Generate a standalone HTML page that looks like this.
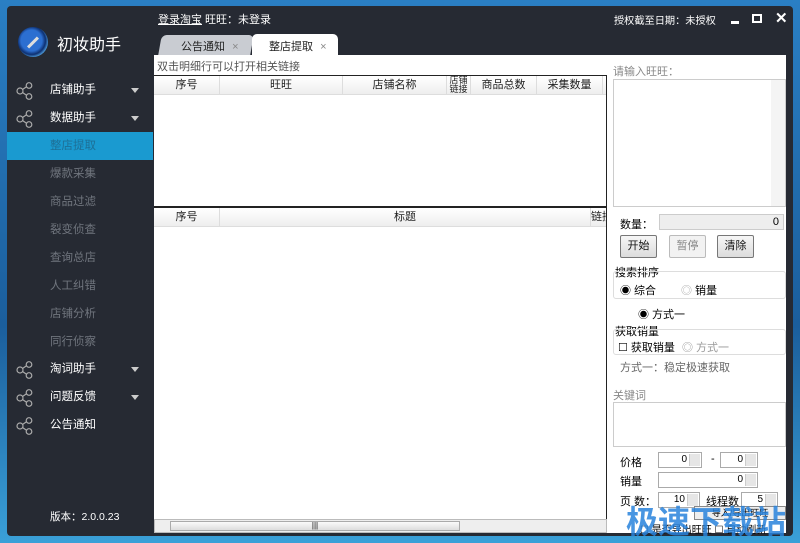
<!DOCTYPE html>
<html><head><meta charset="utf-8"><style>
*{margin:0;padding:0;box-sizing:border-box}
body{width:800px;height:543px;overflow:hidden;background:linear-gradient(180deg,#2a7fc4,#1b5e9c 60%,#3aa0d8);font-family:"Liberation Sans","Noto Sans CJK SC",sans-serif;font-size:11px;position:relative}
.win{position:absolute;left:7px;top:6px;width:786px;height:530px;background:#262a33;border-radius:4px}
.a{position:absolute;white-space:nowrap}
.side .it{position:absolute;left:0;width:146px;height:28px;line-height:28px;color:#fff;font-size:11.5px}
.side .sub{color:#70757e;padding-left:43px}
.ic{position:absolute;left:9px;top:6px}
.arr{position:absolute;right:14px;top:12px;border-left:4px solid transparent;border-right:4px solid transparent;border-top:5px solid #ccc}
.th{position:absolute;top:0;height:19px;line-height:19px;text-align:center;border-right:1px solid #ddd;color:#222;overflow:hidden;white-space:nowrap}
.btn{position:absolute;height:23px;width:37px;border:1px solid #777;border-radius:2px;background:linear-gradient(#f6f6f6,#dcdcdc);text-align:center;line-height:21px;color:#111}
.sp{position:absolute;height:16px;border:1px solid #aaa;background:#fff;text-align:right;padding-right:14px;line-height:14px;font-size:10px}
.sp:after{content:"";position:absolute;right:1px;top:1px;width:10px;height:12px;background:#e6e6e6;border-left:1px solid #ccc}
</style></head><body>
<div class="win">
 <div class="a" style="left:11px;top:21px;width:30px;height:30px;border-radius:50%;background:radial-gradient(circle at 45% 45%,#2c6fd1 0 45%,#0d2f70 60%,#5ab0f0 75%,#1f4f9c 100%)"></div>
 <div class="a" style="left:19px;top:35px;width:14px;height:3px;background:#ddd;transform:rotate(-45deg)"></div>
 <div class="a" style="left:50px;top:25px;color:#fff;font-size:16px">初妆助手</div>
 <div class="a" style="left:151px;top:5px;color:#fff;font-size:11px"><u>登录淘宝</u> 旺旺：未登录</div>
 <div class="a" style="left:607px;top:6px;color:#fff;font-size:10.2px">授权截至日期：未授权</div>
 <div class="a" style="left:724px;top:15px;width:8px;height:3px;background:#fff"></div>
 <div class="a" style="left:745px;top:8px;width:10px;height:9px;border:2px solid #fff"></div>
 <div class="a" style="left:768px;top:3px;color:#fff;font-size:15px;font-weight:bold">✕</div>
 <div class="a" style="left:153px;top:29px;width:92px;height:20px;background:#c9ccd2;border-radius:5px 5px 0 0;transform:skewX(-10deg);"></div>
 <div class="a" style="left:174px;top:32px;font-size:11px;color:#222">公告通知 <span style="color:#888;margin-left:4px">×</span></div>
 <div class="a" style="left:245px;top:28px;width:86px;height:22px;background:#fff;border-radius:5px 5px 0 0"></div>
 <div class="a" style="left:262px;top:32px;font-size:11px;color:#222">整店提取 <span style="color:#888;margin-left:4px">×</span></div>
 <div class="side">
  <div class="it" style="top:70px"><svg class="ic" width="18" height="18" viewBox="0 0 18 18" fill="none" stroke="#aaa" stroke-width="1.2"><circle cx="4" cy="9" r="3"/><circle cx="13" cy="3.5" r="2.8"/><circle cx="13" cy="14.5" r="2.8"/><path d="M6.5 7.5L10.5 4.8M6.5 10.5L10.5 13.2"/></svg><span style="margin-left:43px">店铺助手</span><i class="arr"></i></div>
  <div class="it" style="top:98px"><svg class="ic" width="18" height="18" viewBox="0 0 18 18" fill="none" stroke="#aaa" stroke-width="1.2"><circle cx="4" cy="9" r="3"/><circle cx="13" cy="3.5" r="2.8"/><circle cx="13" cy="14.5" r="2.8"/><path d="M6.5 7.5L10.5 4.8M6.5 10.5L10.5 13.2"/></svg><span style="margin-left:43px">数据助手</span><i class="arr"></i></div>
  <div class="it sub" style="top:126px;background:#1a9ad0;color:#1d6f96;height:28px">整店提取</div>
  <div class="it sub" style="top:154px">爆款采集</div>
  <div class="it sub" style="top:182px">商品过滤</div>
  <div class="it sub" style="top:210px">裂变侦查</div>
  <div class="it sub" style="top:238px">查询总店</div>
  <div class="it sub" style="top:266px">人工纠错</div>
  <div class="it sub" style="top:294px">店铺分析</div>
  <div class="it sub" style="top:322px">同行侦察</div>
  <div class="it" style="top:349px"><svg class="ic" width="18" height="18" viewBox="0 0 18 18" fill="none" stroke="#aaa" stroke-width="1.2"><circle cx="4" cy="9" r="3"/><circle cx="13" cy="3.5" r="2.8"/><circle cx="13" cy="14.5" r="2.8"/><path d="M6.5 7.5L10.5 4.8M6.5 10.5L10.5 13.2"/></svg><span style="margin-left:43px">淘词助手</span><i class="arr"></i></div>
  <div class="it" style="top:377px"><svg class="ic" width="18" height="18" viewBox="0 0 18 18" fill="none" stroke="#aaa" stroke-width="1.2"><circle cx="4" cy="9" r="3"/><circle cx="13" cy="3.5" r="2.8"/><circle cx="13" cy="14.5" r="2.8"/><path d="M6.5 7.5L10.5 4.8M6.5 10.5L10.5 13.2"/></svg><span style="margin-left:43px">问题反馈</span><i class="arr"></i></div>
  <div class="it" style="top:405px"><svg class="ic" width="18" height="18" viewBox="0 0 18 18" fill="none" stroke="#aaa" stroke-width="1.2"><circle cx="4" cy="9" r="3"/><circle cx="13" cy="3.5" r="2.8"/><circle cx="13" cy="14.5" r="2.8"/><path d="M6.5 7.5L10.5 4.8M6.5 10.5L10.5 13.2"/></svg><span style="margin-left:43px">公告通知</span></div>
  <div class="it" style="top:497px;padding-left:43px;font-size:10.5px">版本：2.0.0.23</div>
 </div>
 <div class="a" style="left:147px;top:49px;width:632px;height:478px;background:#fff">
  <div class="a" style="left:3px;top:3px;color:#555;font-size:11px">双击明细行可以打开相关链接</div>
  <div class="a" style="left:0;top:20px;width:453px;height:132px;border:1px solid #222;border-left:none">
   <div class="a" style="left:0;top:0;width:452px;height:19px;background:linear-gradient(#fff,#eee);border-bottom:1px solid #ddd">
    <div class="th" style="left:0;width:66px">序号</div><div class="th" style="left:66px;width:123px">旺旺</div><div class="th" style="left:189px;width:104px">店铺名称</div><div class="th" style="left:293px;width:24px;font-size:9px;line-height:9px;white-space:normal">店铺<br>链接</div><div class="th" style="left:317px;width:66px">商品总数</div><div class="th" style="left:383px;width:66px">采集数量</div>
   </div>
  </div>
  <div class="a" style="left:0;top:152px;width:453px;height:312px;border-top:1px solid #222;border-right:1px solid #222">
   <div class="a" style="left:0;top:0;width:452px;height:19px;background:linear-gradient(#fff,#eee);border-bottom:1px solid #ddd">
    <div class="th" style="left:0;width:66px">序号</div><div class="th" style="left:66px;width:371px">标题</div><div class="th" style="left:437px;width:15px;border:none;text-align:left">链接</div>
   </div>
  </div>
  <div class="a" style="left:0;top:464px;width:453px;height:14px;background:#eee;border:1px solid #bbb">
   <div class="a" style="left:15px;top:1px;width:290px;height:10px;background:linear-gradient(#fafafa,#ddd);border:1px solid #aaa;text-align:center;font-size:8px;line-height:8px">|||</div>
  </div>
  <div class="a" style="left:459px;top:8px;color:#888">请输入旺旺：</div>
  <div class="a" style="left:459px;top:24px;width:173px;height:128px;border:1px solid #ccc"><div class="a" style="right:0;top:0;width:14px;height:126px;background:#f4f4f4"></div></div>
  <div class="a" style="left:466px;top:161px">数量：</div>
  <div class="a" style="left:505px;top:159px;width:125px;height:16px;background:#eee;border:1px solid #ccc;text-align:right;padding-right:4px;line-height:14px">0</div>
  <div class="btn" style="left:466px;top:180px">开始</div>
  <div class="btn" style="left:515px;top:180px;color:#888;border-color:#bbb;background:#f2f2f2">暂停</div>
  <div class="btn" style="left:563px;top:180px">清除</div>
  <div class="a" style="left:461px;top:209px">搜索排序</div>
  <div class="a" style="left:459px;top:216px;width:173px;height:28px;border:1px solid #ddd;border-radius:3px"></div>
  <div class="a" style="left:466px;top:227px">◉ 综合</div><div class="a" style="left:527px;top:227px"><span style="color:#aaa">◎</span> 销量</div>
  <div class="a" style="left:484px;top:251px">◉ 方式一</div>
  <div class="a" style="left:461px;top:268px">获取销量</div>
  <div class="a" style="left:459px;top:274px;width:173px;height:26px;border:1px solid #ddd;border-radius:3px"></div>
  <div class="a" style="left:464px;top:284px">☐ 获取销量 <span style="color:#999;margin-left:4px">◎ 方式一</span></div>
  <div class="a" style="left:466px;top:304px;color:#666">方式一：稳定极速获取</div>
  <div class="a" style="left:459px;top:332px;color:#888">关键词</div>
  <div class="a" style="left:459px;top:347px;width:173px;height:45px;border:1px solid #ccc"></div>
  <div class="a" style="left:466px;top:399px">价格</div>
  <div class="sp" style="left:504px;top:397px;width:44px">0</div><div class="a" style="left:557px;top:398px">-</div>
  <div class="sp" style="left:566px;top:397px;width:38px">0</div>
  <div class="a" style="left:466px;top:418px">销量</div>
  <div class="sp" style="left:504px;top:417px;width:100px">0</div>
  <div class="a" style="left:466px;top:438px">页 数：</div>
  <div class="sp" style="left:504px;top:437px;width:42px">10</div>
  <div class="a" style="left:552px;top:438px">线程数</div>
  <div class="sp" style="left:587px;top:437px;width:37px">5</div>
  <div class="a" style="left:540px;top:451px;width:92px;height:14px;border:1px solid #888;background:#eee;font-size:9px;line-height:12px;text-align:center">导入/导出旺旺</div>
  <div class="a" style="left:486px;top:466px;font-size:10px">☐ 是否导出旺旺 ☐ 自动刷新</div>
 </div>
</div>
<div class="a" style="left:626px;top:497px;font-size:32px;font-weight:bold;color:rgba(40,130,220,0.85)">极速下载站</div>
</body></html>
